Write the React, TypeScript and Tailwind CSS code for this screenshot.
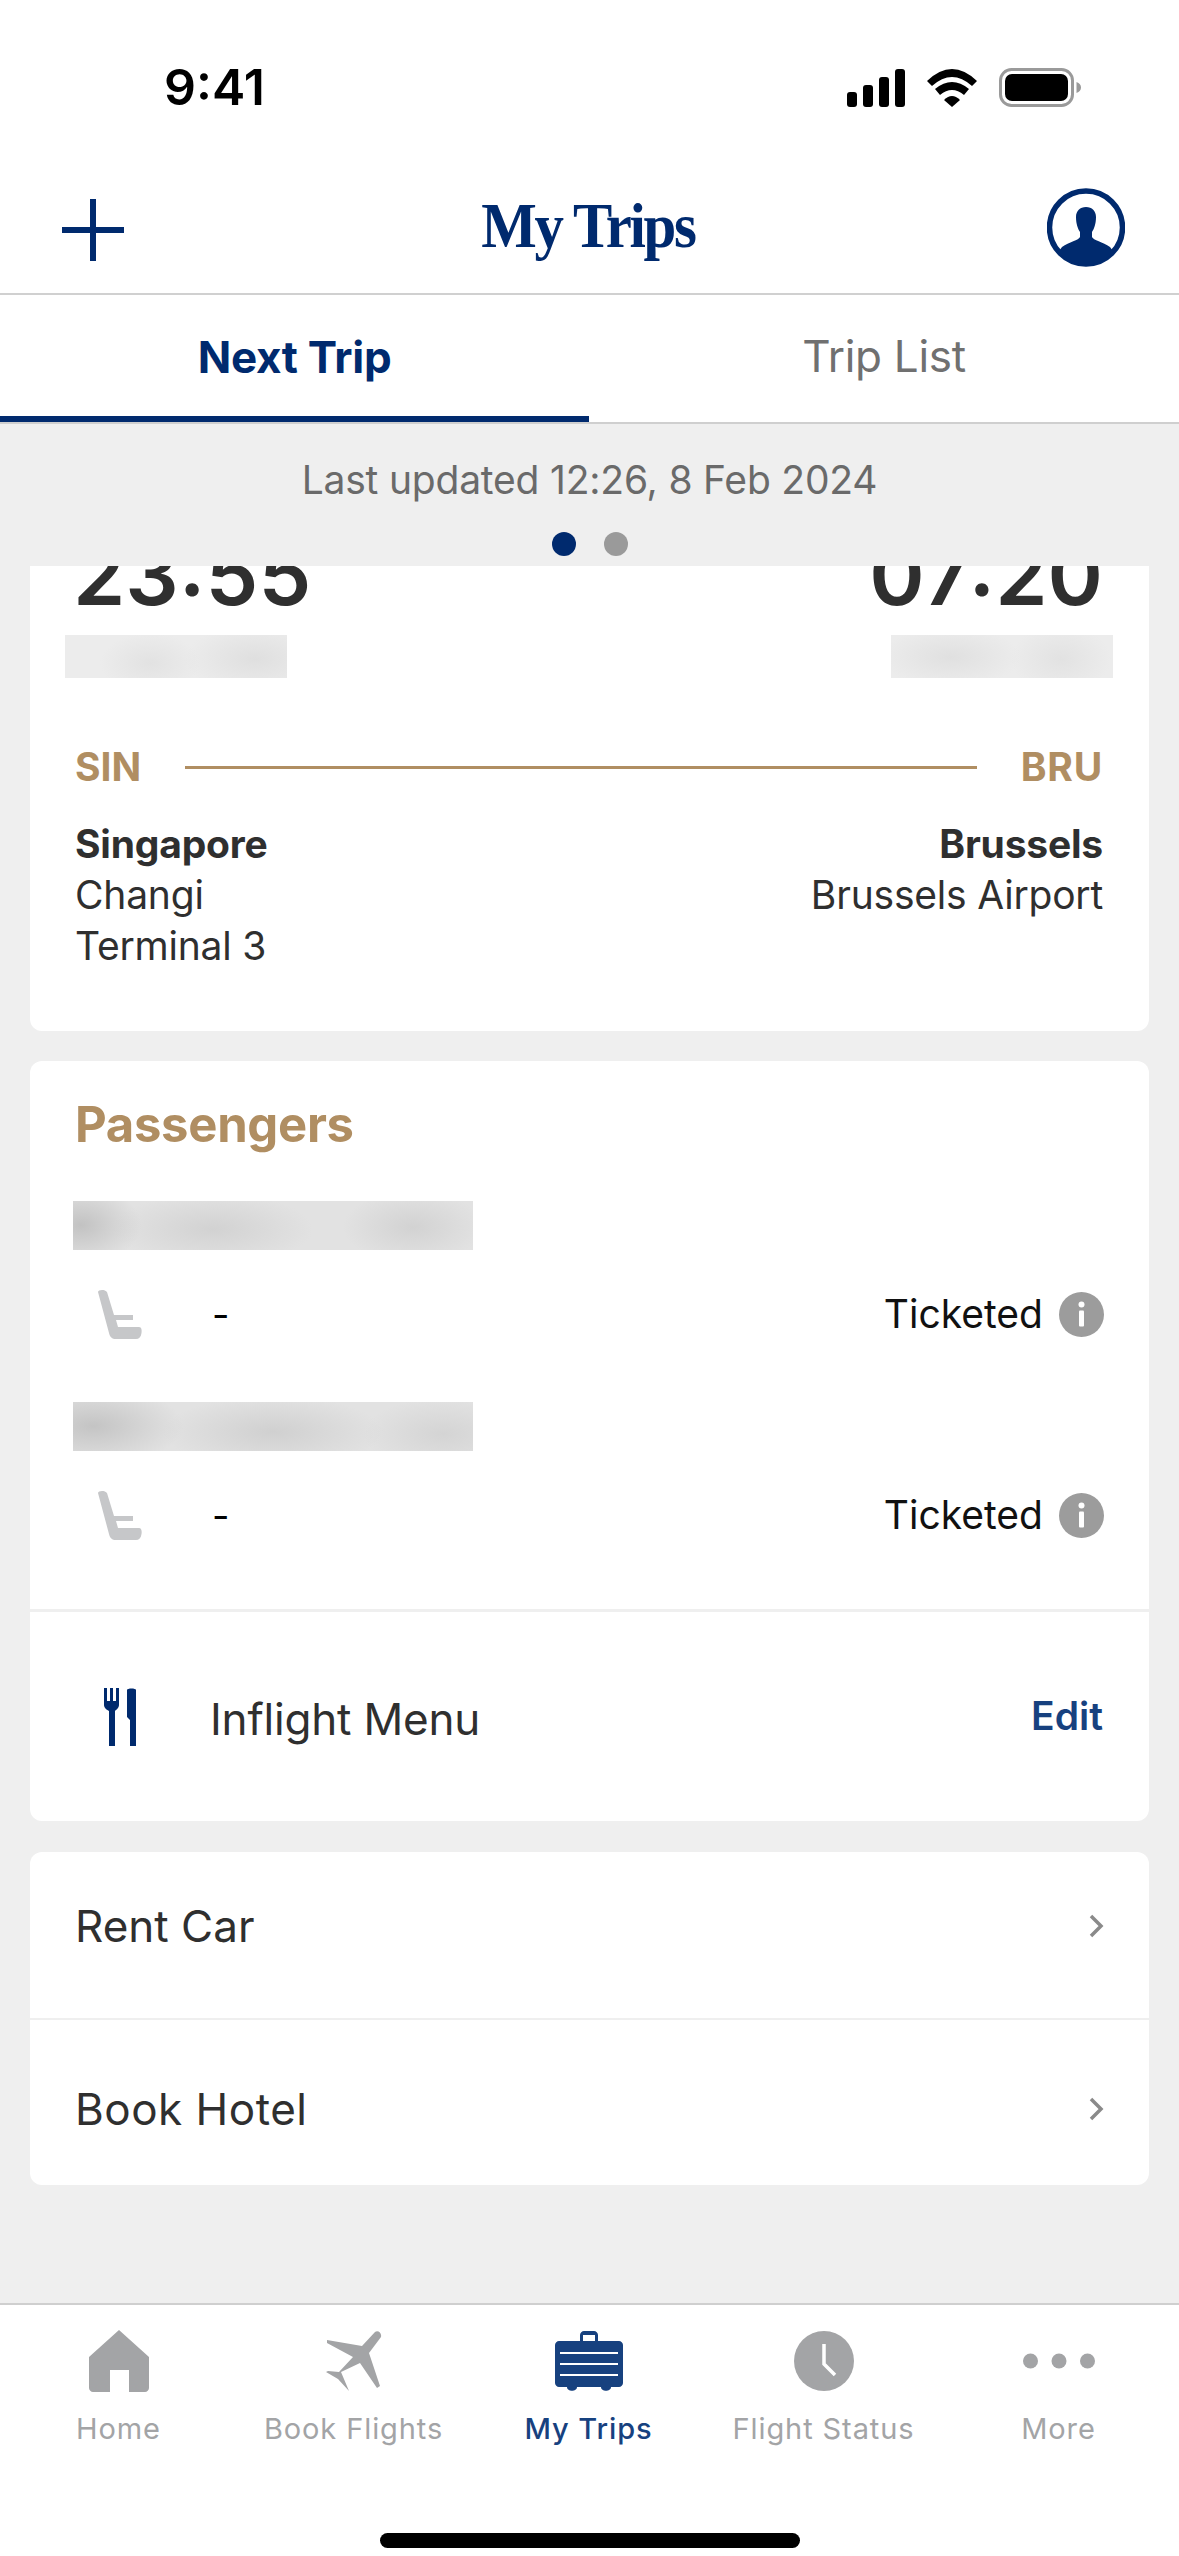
import React from 'react';

const navy = '#002a6e';

function Redacted({ className }: { className: string }) {
  return <div className={className} />;
}

function SeatIcon() {
  return (
    <svg width="45" height="50" viewBox="0 0 45 50" className="shrink-0">
      <path d="M1 3 C1 0.5 8 0 10 3 L17 26 H36 V31 H19 L21 38 H42 C44.5 38 45 41 44.5 44 C44 48 42 50 39 50 H19 C15 50 13 48 12 44 Z" fill="#c6c7c9" />
    </svg>
  );
}

function InfoIcon() {
  return (
    <svg width="45" height="45" viewBox="0 0 45 45" className="shrink-0">
      <circle cx="22.5" cy="22.5" r="22.5" fill="#9c9c9c" />
      <circle cx="22.5" cy="12.5" r="3" fill="#fff" />
      <rect x="20" y="18.5" width="5" height="16" rx="1" fill="#fff" />
    </svg>
  );
}

function Chevron() {
  return (
    <svg width="18" height="26" viewBox="0 0 18 26" className="shrink-0">
      <path d="M3 3 L13 13 L3 23" fill="none" stroke="#8a8a8a" strokeWidth="3.5" />
    </svg>
  );
}

function PassengerRow({ redact }: { redact: string }) {
  return (
    <>
      <Redacted className={redact} />
      <div className="mt-[34px] flex h-[60px] items-center pl-[22px]">
        <SeatIcon />
        <span className="ml-[70px] text-[38px] text-black">-</span>
        <span className="ml-auto text-[39px] text-[#111]">Ticketed</span>
        <span className="ml-[16px]"><InfoIcon /></span>
      </div>
    </>
  );
}

function NavItem({ label, active, children }: { label: string; active?: boolean; children: React.ReactNode }) {
  return (
    <div className="flex w-[235px] flex-col items-center">
      <div className="flex h-[62px] items-center justify-center">{children}</div>
      <span className={`mt-[21px] text-[29px] leading-[32px] tracking-[0.9px] ${active ? 'font-medium text-[#17417f]' : 'text-[#a3a4a6]'}`}>{label}</span>
    </div>
  );
}

export default function App() {
  return (
    <div className="flex h-[2556px] w-full flex-col overflow-hidden bg-[#efefef] font-['Inter',sans-serif] text-[#2f2f2f]">
      {/* status bar */}
      <div className="flex h-[175px] items-start bg-white pt-[56px] pr-[98px] pl-[164px]">
        <span className="text-[50px] leading-[62px] font-semibold text-black">9:41</span>
        <div className="ml-auto flex items-center gap-[22px] pt-[12px]">
          <svg width="58" height="38" viewBox="0 0 58 38">
            <rect x="0" y="23" width="10" height="15" rx="3" fill="#000" />
            <rect x="16" y="16" width="10" height="22" rx="3" fill="#000" />
            <rect x="32" y="8" width="10" height="30" rx="3" fill="#000" />
            <rect x="48" y="0" width="10" height="38" rx="3" fill="#000" />
          </svg>
          <svg width="50" height="38" viewBox="0 0 50 38">
            <path d="M0 12 Q25 -12 50 12 L45 17 Q25 -1 5 17 Z" fill="#000" />
            <path d="M8 20 Q25 6 42 20 L37 26 Q25 16 13 26 Z" fill="#000" />
            <path d="M17 31 Q25 23 33 31 L25 38 Z" fill="#000" />
          </svg>
          <svg width="82" height="39" viewBox="0 0 82 39">
            <rect x="1.5" y="1.5" width="72" height="36" rx="11" fill="none" stroke="#9a9a9a" strokeWidth="3" />
            <rect x="6" y="6" width="63" height="27" rx="7" fill="#000" />
            <path d="M77.5 14 C80.5 15 82 17 82 19.5 C82 22 80.5 24 77.5 25 Z" fill="#9a9a9a" />
          </svg>
        </div>
      </div>

      {/* header */}
      <div className="flex h-[120px] items-center justify-between border-b-[2px] border-[#d0d0d0] bg-white pr-[54px] pl-[62px]">
        <svg width="62" height="62" viewBox="0 0 62 62" className="mt-[-8px]">
          <path d="M28 0 H34 V28 H62 V34 H34 V62 H28 V34 H0 V28 H28 Z" fill={navy} />
        </svg>
        <span className="mt-[-17px] ml-[5px] scale-x-[0.92] font-['Liberation_Serif',serif] text-[64px] leading-[80px] font-bold tracking-[-2.5px] text-[#002a6e]">My Trips</span>
        <svg width="78" height="79" viewBox="0 0 78 79" className="mt-[-14px]">
          <defs>
            <clipPath id="avatar-clip"><circle cx="39" cy="39.5" r="37" /></clipPath>
          </defs>
          <circle cx="39" cy="39.5" r="36.5" fill="#fff" stroke={navy} strokeWidth="5.5" />
          <g clipPath="url(#avatar-clip)" fill={navy}>
            <path d="M39 19 C45 19 49 23 49 29 C49 36 47 41 45 44 V49 C46 52 56 54 63 59 L78 79 H0 L15 59 C22 54 32 52 33 49 V44 C31 41 29 36 29 29 C29 23 33 19 39 19 Z" />
          </g>
        </svg>
      </div>

      {/* tabs */}
      <div className="flex h-[129px] border-b-[2px] border-[#cfcfcf] bg-white">
        <div className="flex w-[589px] items-center justify-center border-b-[6px] border-[#002a6e] pt-[2px] text-[44px] font-bold tracking-[-0.3px] text-[#002a6e]">Next Trip</div>
        <div className="flex flex-1 items-center justify-center pb-[6px] text-[44px] tracking-[-0.3px] text-[#707070]">Trip List</div>
      </div>

      {/* updated + pager */}
      <div className="flex h-[142px] flex-col items-center">
        <span className="mt-[33px] text-[39px] leading-[46px] tracking-[-0.2px] text-[#6a6a6a]">Last updated 12:26, 8 Feb 2024</span>
        <div className="mt-[29px] flex gap-[28px]">
          <span className="h-[24px] w-[24px] rounded-full bg-[#002a6e]" />
          <span className="h-[24px] w-[24px] rounded-full bg-[#9a9a9a]" />
        </div>
      </div>

      {/* scroll area */}
      <div className="flex-1 overflow-hidden px-[30px]">
        {/* flight card, scrolled under the header */}
        <div className="mt-[-31px] rounded-[12px] bg-white pr-[46px] pb-[60px] pl-[45px]">
          <div className="flex h-[80px] items-center justify-between text-[84px] font-semibold">
            <span className="ml-[-2px]">23:55</span>
            <span>07:20</span>
          </div>
          <div className="mt-[20px] flex justify-between">
            <Redacted className="ml-[-10px] h-[43px] w-[222px] bg-[radial-gradient(ellipse_50px_30px_at_85px_28px,#e2e2e2,transparent),radial-gradient(ellipse_70px_34px_at_190px_24px,#dfdfdf,transparent),linear-gradient(#ececec,#ececec)]" />
            <Redacted className="mr-[-10px] h-[43px] w-[222px] bg-[radial-gradient(ellipse_70px_30px_at_60px_22px,#e0e0e0,transparent),radial-gradient(ellipse_50px_34px_at_170px_24px,#e2e2e2,transparent),linear-gradient(#ececec,#ececec)]" />
          </div>
          <div className="mt-[69px] flex h-[40px] items-center text-[39px] font-bold text-[#b08e62]">
            <span>SIN</span>
            <div className="mr-[44px] ml-[44px] h-[3px] flex-1 bg-[#b08e62]" />
            <span className="tracking-[0.8px]">BRU</span>
          </div>
          <div className="mt-[31px] flex justify-between text-[39px] leading-[51px] tracking-[-0.2px]">
            <div>
              <div className="font-bold">Singapore</div>
              <div>Changi</div>
              <div>Terminal 3</div>
            </div>
            <div className="text-right">
              <div className="font-bold">Brussels</div>
              <div>Brussels Airport</div>
            </div>
          </div>
        </div>

        {/* passengers */}
        <div className="mt-[30px] rounded-[12px] bg-white">
          <div className="pt-[34px] pr-[45px] pl-[45px]">
            <div className="flex h-[60px] items-center text-[49px] font-bold tracking-[-0.3px] text-[#b08e62]">Passengers</div>
            <div className="mt-[46px]">
              <PassengerRow redact="ml-[-2px] h-[49px] w-[400px] bg-[radial-gradient(ellipse_60px_40px_at_8px_24px,#c2c2c2,transparent),radial-gradient(ellipse_100px_36px_at_140px_28px,#d2d2d2,transparent),radial-gradient(ellipse_70px_36px_at_340px_26px,#d2d2d2,transparent),linear-gradient(#e2e2e2,#e2e2e2)]" />
            </div>
            <div className="mt-[58px]">
              <PassengerRow redact="ml-[-2px] h-[49px] w-[400px] bg-[radial-gradient(ellipse_90px_40px_at_20px_24px,#c4c4c4,transparent),radial-gradient(ellipse_110px_36px_at_200px_30px,#d0d0d0,transparent),radial-gradient(ellipse_80px_36px_at_370px_32px,#d4d4d4,transparent),linear-gradient(#e2e2e2,#e2e2e2)]" />
            </div>
          </div>
          <div className="mt-[64px] h-[3px] bg-[#efefef]" />
          <div className="flex h-[209px] items-center pr-[46px] pl-[74px]">
            <svg width="32" height="58" viewBox="0 0 32 58" className="shrink-0">
              <path d="M0 0 H3 V13 H6 V0 H9 V13 H12 V0 H15 V17 C15 20 12 22 11 23 V58 H5 V23 C3 22 0 20 0 17 Z" fill={navy} />
              <path d="M23 2 C23 0 32 0 32 2 V58 H26 V32 L23 29 Z" fill={navy} />
            </svg>
            <span className="ml-[74px] pt-[4px] text-[44px] leading-[54px] tracking-[-0.2px]">Inflight Menu</span>
            <span className="ml-auto text-[39px] font-semibold text-[#17417f]">Edit</span>
          </div>
        </div>

        {/* extras */}
        <div className="mt-[31px] rounded-[12px] bg-white pr-[43px] pl-[45px] text-[44px]">
          <div className="flex h-[166px] items-center justify-between pb-[18px]">
            <span>Rent Car</span>
            <Chevron />
          </div>
          <div className="mr-[-43px] ml-[-45px] h-[2px] bg-[#efefef]" />
          <div className="flex h-[165px] items-center justify-between pt-[13px]">
            <span className="tracking-[0.5px]">Book Hotel</span>
            <Chevron />
          </div>
        </div>
      </div>

      {/* tab bar */}
      <div className="flex h-[253px] shrink-0 flex-col border-t-[2px] border-[#cfcfcf] bg-white">
        <div className="flex pt-[25px] pl-[1px]">
          <NavItem label="Home">
            <svg width="60" height="62" viewBox="0 0 60 62">
              <path d="M30 0 L60 27 V58 C60 60 58 62 56 62 H40 V40 H21 V62 H4 C2 62 0 60 0 58 V27 Z" fill="#a3a4a6" />
            </svg>
          </NavItem>
          <NavItem label="Book Flights">
            <svg width="56" height="60" viewBox="0 0 56 60">
              <path d="M55 6 L43 22 L54 55 L51 57 L34 32 L15 41 L23 60 L12 48 L0 41 L2 40 L13 41 L27 26 L1 12 L1 9 L36 15 L49 1 C52 -1 56 2 55 6 Z" fill="#a3a4a6" />
            </svg>
          </NavItem>
          <NavItem label="My Trips" active>
            <svg width="68" height="60" viewBox="0 0 68 60">
              <path d="M25 11 V4 C25 2 27 0 29 0 H39 C41 0 43 2 43 4 V11 H40 V4 H28 V11 Z" fill="#17417f" />
              <path d="M4 10 H64 C66 10 68 12 68 14 V52 C68 54 66 56 64 56 H56 C56 61 46 61 46 56 H22 C22 61 12 61 12 56 H4 C2 56 0 54 0 52 V14 C0 12 2 10 4 10 Z" fill="#17417f" />
              <rect x="5" y="21" width="58" height="2" fill="#fff" />
              <rect x="5" y="32" width="58" height="2" fill="#fff" />
              <rect x="5" y="43" width="58" height="2" fill="#fff" />
            </svg>
          </NavItem>
          <NavItem label="Flight Status">
            <svg width="60" height="62" viewBox="0 0 60 62">
              <circle cx="30" cy="31" r="30" fill="#a3a4a6" />
              <path d="M30 14 V34 L41 45" fill="none" stroke="#fff" strokeWidth="3.5" />
            </svg>
          </NavItem>
          <NavItem label="More">
            <svg width="72" height="16" viewBox="0 0 72 16">
              <circle cx="7.5" cy="8" r="7.5" fill="#a3a4a6" />
              <circle cx="36" cy="8" r="7.5" fill="#a3a4a6" />
              <circle cx="64.5" cy="8" r="7.5" fill="#a3a4a6" />
            </svg>
          </NavItem>
        </div>
        <div className="mx-auto mt-[88px] h-[15px] w-[420px] rounded-full bg-black" />
      </div>
    </div>
  );
}
